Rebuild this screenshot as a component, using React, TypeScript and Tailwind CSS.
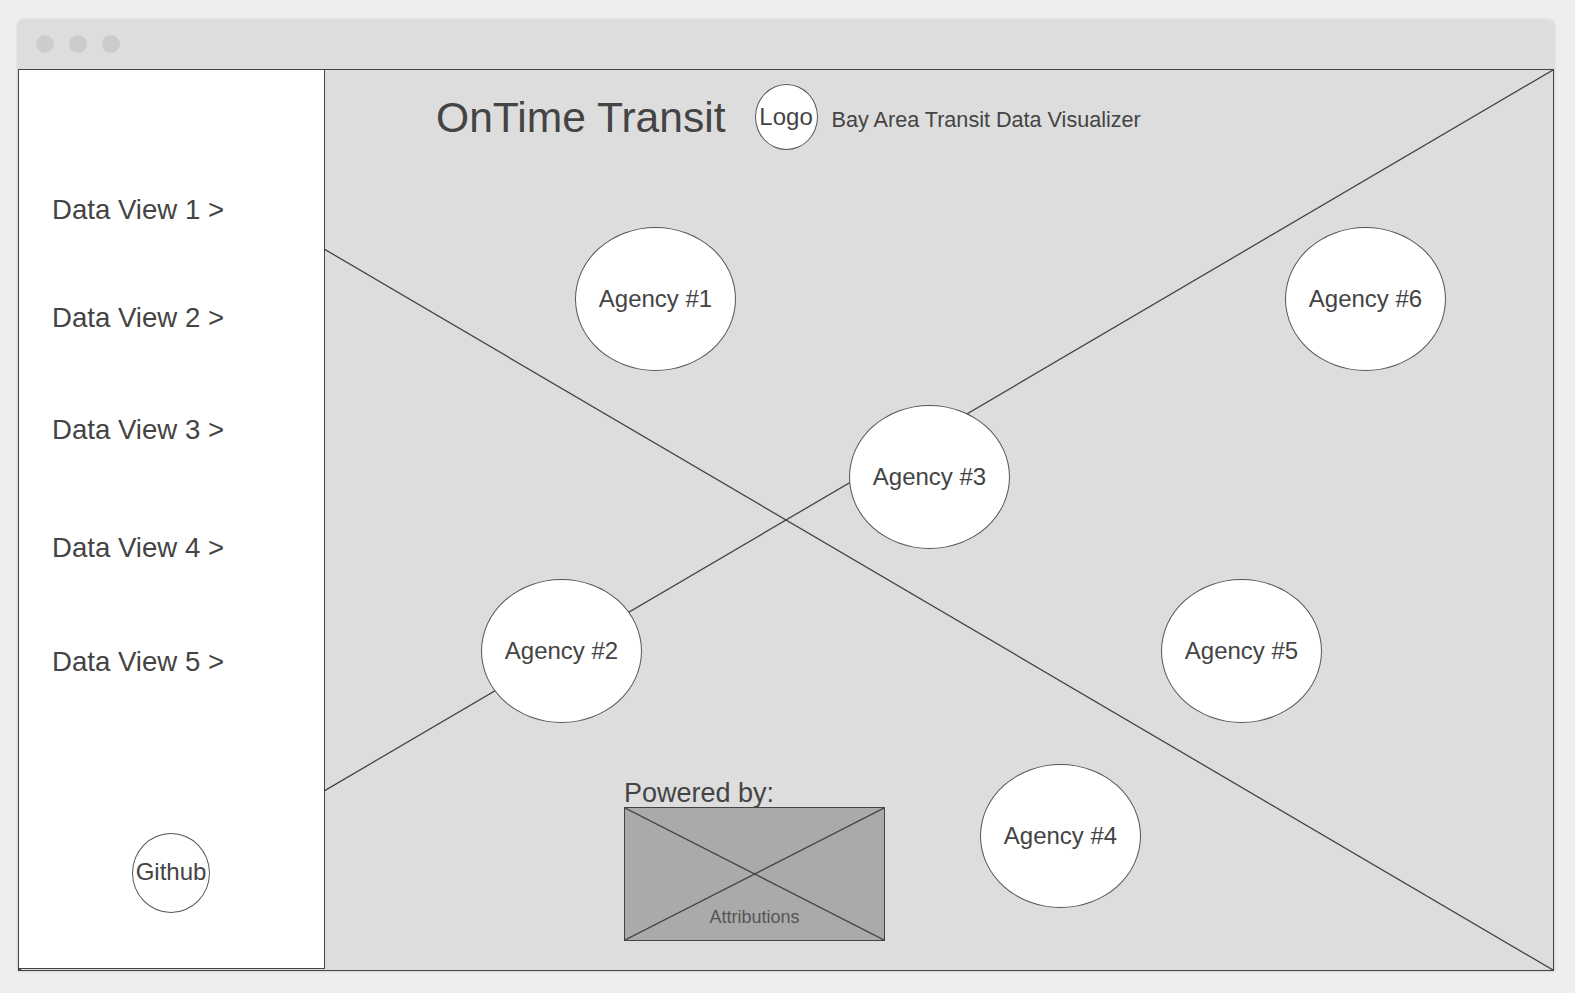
const views = [
  { label: "Data View 1 >", cls: "mt-[124px]" },
  { label: "Data View 2 >", cls: "mt-[76px]" },
  { label: "Data View 3 >", cls: "mt-[80px]" },
  { label: "Data View 4 >", cls: "mt-[86px]" },
  { label: "Data View 5 >", cls: "mt-[82px]" },
];

const agencies = [
  { name: "Agency #1", pos: "left-[250px] top-[157px]" },
  { name: "Agency #6", pos: "left-[960px] top-[157px]" },
  { name: "Agency #3", pos: "left-[524px] top-[335px]" },
  { name: "Agency #2", pos: "left-[156px] top-[509px]" },
  { name: "Agency #5", pos: "left-[836px] top-[509px]" },
  { name: "Agency #4", pos: "left-[655px] top-[694px]" },
];

const Cross = ({ color = "#444" }: { color?: string }) => (
  <svg
    className="absolute inset-0 h-full w-full"
    viewBox="0 0 100 100"
    preserveAspectRatio="none"
  >
    <line x1="0" y1="0" x2="100" y2="100" stroke={color} strokeWidth="1.3" vectorEffect="non-scaling-stroke" />
    <line x1="0" y1="100" x2="100" y2="0" stroke={color} strokeWidth="1.3" vectorEffect="non-scaling-stroke" />
  </svg>
);

const App = () => {
  return (
    <div className="min-h-screen bg-[#eeeeee] pl-[17px] pt-[19px] font-['Liberation_Sans',Arial,sans-serif] text-[#444]">
      <div className="w-[1538px] rounded-t-[8px] bg-[#dddddd] pb-[1px] shadow-[0_0_3px_rgba(0,0,0,0.08)]">
        {/* window title bar */}
        <div className="flex h-[50px] items-center gap-[15px] pl-[19px]">
          <span className="h-[18px] w-[18px] rounded-full bg-[#cccccc]" />
          <span className="h-[18px] w-[18px] rounded-full bg-[#cccccc]" />
          <span className="h-[18px] w-[18px] rounded-full bg-[#cccccc]" />
        </div>

        <div className="relative ml-[1px] flex h-[902px] w-[1536px] border border-[#444]">
          <Cross />

          {/* sidebar */}
          <div className="relative z-10 flex h-[899px] w-[306px] flex-col border-b border-r border-[#444] bg-white pl-[33px]">
            {views.map((v) => (
              <div key={v.label} className={`${v.cls} text-[27.6px] leading-8`}>
                {v.label}
              </div>
            ))}
            <div className="mb-[55px] ml-[80px] mt-auto flex h-[80px] w-[78px] items-center justify-center rounded-[50%] border border-[#555] bg-white pb-[3px] text-[24px]">
              Github
            </div>
          </div>

          {/* main canvas */}
          <div className="relative flex-1">
            <div className="flex items-center pl-[111px] pt-[14px]">
              <h1 className="pt-[1px] text-[42.6px] leading-none">OnTime Transit</h1>
              <div className="ml-[29px] flex h-[66px] w-[63px] items-center justify-center rounded-[50%] border border-[#555] bg-white text-[24px]">
                Logo
              </div>
              <p className="ml-[14px] pt-[7px] text-[21.6px]">Bay Area Transit Data Visualizer</p>
            </div>

            {agencies.map((a) => (
              <div
                key={a.name}
                className={`absolute ${a.pos} flex h-[144px] w-[161px] items-center justify-center rounded-[50%] border border-[#555] bg-white text-[24px]`}
              >
                {a.name}
              </div>
            ))}

            <div className="absolute left-[299px] top-[710px] flex flex-col">
              <span className="text-[27px] leading-none">Powered by:</span>
              <div className="relative flex h-[134px] w-[261px] items-end justify-center border border-[#444] bg-[#aaaaaa] pb-[9px]">
                <Cross />
                <span className="relative text-[18px] text-[#555]">Attributions</span>
              </div>
            </div>
          </div>
        </div>
      </div>
    </div>
  );
};

export default App;
